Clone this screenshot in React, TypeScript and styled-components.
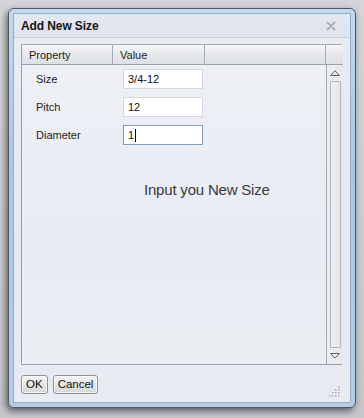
import React from "react";
import styled, { createGlobalStyle } from "styled-components";

const Global = createGlobalStyle`
  html, body { margin: 0; padding: 0; }
  body {
    width: 364px; height: 418px; overflow: hidden;
    background: linear-gradient(#d4d5d8, #c6c7ca);
    font-family: "Liberation Sans", Arial, sans-serif;
  }
`;

const Page = styled.div`
  padding: 8px 8px 10px 8px;
  box-sizing: border-box;
  width: 364px;
  height: 418px;
`;

const Frame = styled.div`
  box-sizing: border-box;
  width: 348px;
  height: 400px;
  border: 1px solid #4d5663;
  border-radius: 6px;
  background: linear-gradient(#c4d8ee, #a9c6e6 40%, #b3cdea);
  padding: 4px;
  box-shadow: -2px 3px 7px rgba(0, 0, 0, 0.55);
  display: flex;
`;

const Panel = styled.div`
  flex: 1;
  display: flex;
  flex-direction: column;
  border: 1px solid #97abc3;
  background: linear-gradient(#e9ecf3, #e4e8f1 60%, #e8ebf2);
  min-width: 0;
`;

const TitleBar = styled.div`
  height: 23px;
  display: flex;
  align-items: center;
  justify-content: space-between;
  padding: 0 14px 0 7px;
  border-bottom: 1px solid #c9d1dd;
  background: linear-gradient(#e3e7ef, #dfe4ed);
`;

const Title = styled.span`
  font-weight: bold;
  font-size: 12px;
  color: #141414;
  letter-spacing: -0.1px;
`;

const Body = styled.div`
  flex: 1;
  display: flex;
  flex-direction: column;
  padding: 6px 8px 0 7px;
`;

const Grid = styled.div`
  height: 319px;
  display: grid;
  grid-template-columns: 91px 92px 121px 17px;
  grid-template-rows: 20px 1fr;
  border: 1px solid #9a9fa8;
  border-top-color: #a6aab2;
`;

const HeadCell = styled.div<{ $last?: boolean }>`
  display: flex;
  align-items: center;
  padding-left: 7px;
  font-size: 11px;
  color: #1e1e1e;
  background: linear-gradient(#f5f6f8, #e6e8ec 50%, #dcdfe4);
  border-right: ${(p) => (p.$last ? "none" : "1px solid #a5a9b0")};
  border-bottom: 1px solid #9ea3ab;
`;

const Rows = styled.div`
  grid-column: 1 / 4;
  display: flex;
  flex-direction: column;
  background: linear-gradient(#eef0f6, #e8ebf3 60%, #eceef4);
`;

const Row = styled.div`
  display: grid;
  grid-template-columns: 87px 80px;
  align-items: center;
  height: 28px;
  padding-left: 14px;
`;

const Label = styled.span`
  font-size: 11px;
  color: #222;
`;

const Field = styled.div<{ $focused?: boolean }>`
  box-sizing: border-box;
  height: 20px;
  background: #fff;
  border: 1px solid ${(p) => (p.$focused ? "#7f9dbf" : "#d3d7de")};
  font-size: 11px;
  color: #111;
  padding-left: 4px;
  display: flex;
  align-items: center;
`;

const Caret = styled.span`
  display: inline-block;
  width: 1px;
  height: 13px;
  background: #000;
  margin-left: 1px;
`;

const Message = styled.div`
  margin-top: 32px;
  padding-left: 122px;
  font-size: 15px;
  color: #3a3a3e;
  letter-spacing: -0.2px;
`;

const ScrollBar = styled.div`
  display: flex;
  flex-direction: column;
  align-items: center;
  border-left: 1px solid #a5a9b0;
  background: linear-gradient(90deg, #eceef3, #e6e9ef);
`;

const Arrow = styled.div`
  height: 16px;
  display: flex;
  align-items: center;
  justify-content: center;
`;

const Thumb = styled.div`
  flex: 1;
  width: 9px;
  border: 1px solid #b4b8bf;
  background: linear-gradient(90deg, #eef0f4, #e2e5eb);
`;

const Footer = styled.div`
  flex: 1;
  display: flex;
  align-items: flex-start;
  gap: 5px;
  padding-top: 10px;
  position: relative;
`;

const Button = styled.button`
  height: 19px;
  padding: 0 4px;
  font-family: "Liberation Sans", Arial, sans-serif;
  font-size: 11.5px;
  color: #111;
  border: 1px solid #8e9196;
  border-radius: 3px;
  background: linear-gradient(#f4f4f4, #e6e6e6 50%, #d6d6d6);
  box-shadow: inset 0 0 0 1px rgba(255, 255, 255, 0.7);
  line-height: 15px;
`;

const Grip = styled.svg`
  position: absolute;
  right: 2px;
  bottom: 5px;
`;

const CloseIcon = () => (
  <svg width="10" height="10" viewBox="0 0 10 10">
    <path d="M1.5 1.5 L8.5 8.5 M8.5 1.5 L1.5 8.5" stroke="#a9adb3" strokeWidth="1.8" strokeLinecap="round" />
  </svg>
);

const rows = [
  { label: "Size", value: "3/4-12" },
  { label: "Pitch", value: "12" },
  { label: "Diameter", value: "1", focused: true },
];

export default function App() {
  const dots: [number, number][] = [];
  for (let r = 0; r < 4; r++) for (let c = 3 - r; c < 4; c++) dots.push([c * 3 + 1, r * 3 + 1]);
  return (
    <>
      <Global />
      <Page>
        <Frame>
          <Panel>
            <TitleBar>
              <Title>Add New Size</Title>
              <CloseIcon />
            </TitleBar>
            <Body>
              <Grid>
                <HeadCell>Property</HeadCell>
                <HeadCell>Value</HeadCell>
                <HeadCell />
                <HeadCell $last />
                <Rows>
                  {rows.map((r) => (
                    <Row key={r.label}>
                      <Label>{r.label}</Label>
                      <Field $focused={r.focused}>
                        {r.value}
                        {r.focused && <Caret />}
                      </Field>
                    </Row>
                  ))}
                  <Message>Input you New Size</Message>
                </Rows>
                <ScrollBar>
                  <Arrow>
                    <svg width="10" height="6" viewBox="0 0 10 6">
                      <path d="M0.5 5.5 L5 0.8 L9.5 5.5 Z" fill="#e8eaee" stroke="#5d6168" strokeWidth="1" />
                    </svg>
                  </Arrow>
                  <Thumb />
                  <Arrow>
                    <svg width="10" height="6" viewBox="0 0 10 6">
                      <path d="M0.5 0.5 L5 5.2 L9.5 0.5 Z" fill="#e8eaee" stroke="#5d6168" strokeWidth="1" />
                    </svg>
                  </Arrow>
                </ScrollBar>
              </Grid>
              <Footer>
                <Button>OK</Button>
                <Button>Cancel</Button>
                <Grip width="12" height="12" viewBox="0 0 12 12">
                  {dots.map(([x, y], i) => (
                    <rect key={i} x={x} y={y} width="1.5" height="1.5" fill="#a8abb2" />
                  ))}
                </Grip>
              </Footer>
            </Body>
          </Panel>
        </Frame>
      </Page>
    </>
  );
}
